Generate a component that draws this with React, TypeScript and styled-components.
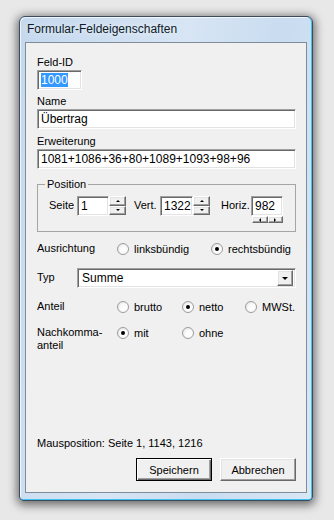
import React from 'react';
import styled, { createGlobalStyle, css } from 'styled-components';

const GlobalStyle = createGlobalStyle`
  html, body {
    margin: 0;
    padding: 0;
    background: #e8e8e8;
  }
  * { box-sizing: border-box; }
`;

const ui = `"Liberation Sans", Arial, sans-serif`;

const Stage = styled.div`
  width: 334px;
  height: 520px;
  padding: 16px 0 0 19px;
`;

const Window = styled.div`
  width: 294px;
  height: 485px;
  border: 1px solid #3d4c5c;
  border-radius: 6px 6px 4px 4px;
  background: linear-gradient(100deg, #c4d8ee 0%, #d7e5f4 45%, #c9dcf0 70%, #d9e7f5 100%);
  box-shadow: 0 2px 10px 2px rgba(0, 0, 0, 0.55), inset 0 -1px 0 #3cc3f2, inset -1px 0 0 #3cc3f2,
    inset 1px 1px 0 rgba(255, 255, 255, 0.7);
  display: flex;
  flex-direction: column;
`;

const TitleBar = styled.div`
  height: 25px;
  padding: 5px 0 0 7px;
  font-family: ${ui};
  font-size: 12px;
  color: #0d1a28;
  text-shadow: 0 0 6px rgba(255, 255, 255, 0.9);
`;

const Client = styled.div`
  margin: 0 5px;
  height: 451px;
  border: 1px solid #7f8d9b;
  background: #f0f0f0;
  padding: 12px 10px 11px 11px;
  display: flex;
  flex-direction: column;
  font-family: ${ui};
  font-size: 11px;
  color: #000;
`;

const Label = styled.div`
  height: 15px;
  line-height: 15px;
  white-space: nowrap;
`;

const sunken = css`
  background: #fff;
  border-top: 1px solid #a0a0a0;
  border-left: 1px solid #a0a0a0;
  border-bottom: 1px solid #fff;
  border-right: 1px solid #fff;
  box-shadow: inset 1px 1px 0 #696969, inset -1px -1px 0 #e3e3e3;
`;

const raised = css`
  background: #f0f0f0;
  border-top: 1px solid #fff;
  border-left: 1px solid #fff;
  border-bottom: 1px solid #696969;
  border-right: 1px solid #696969;
  box-shadow: inset -1px -1px 0 #a0a0a0, inset 1px 1px 0 #e3e3e3;
`;

const Field = styled.div<{ $w?: number; $mb?: number }>`
  ${sunken};
  width: ${(p) => (p.$w ? `${p.$w}px` : '100%')};
  height: 20px;
  padding: 2px 3px 0 3px;
  line-height: 15px;
  font-size: 12px;
  white-space: nowrap;
  overflow: hidden;
  margin-bottom: ${(p) => p.$mb ?? 4}px;
`;

const Selected = styled.span`
  background: #3399ff;
  color: #fff;
`;

const Group = styled.fieldset`
  margin: 9px 0 0 0;
  padding: 5px 0 8px 11px;
  border: 1px solid #a5a5a5;
  min-width: 0;
`;

const Legend = styled.legend`
  padding: 0 2px;
  margin-left: -4px;
  font-size: 11px;
  line-height: 13px;
`;

const PosRow = styled.div`
  display: flex;
  align-items: flex-start;
`;

const PosLabel = styled.span<{ $w: number; $ml?: number }>`
  width: ${(p) => p.$w}px;
  margin-left: ${(p) => p.$ml ?? 0}px;
  height: 19px;
  line-height: 19px;
  font-size: 11px;
  flex: none;
`;

const Spinner = styled.div`
  display: flex;
  flex-direction: column;
  width: 17px;
  height: 19px;
  flex: none;
`;

const SpinBtn = styled.div`
  ${raised};
  flex: 1;
  display: flex;
  align-items: center;
  justify-content: center;
`;

const HorizCol = styled.div`
  display: flex;
  flex-direction: column;
`;

const HSpinner = styled.div`
  display: flex;
  width: 31px;
  height: 7px;
  margin-left: 1px;
`;

const Arrow = styled.span<{ $dir: 'up' | 'down' | 'left' | 'right'; $s?: number }>`
  width: 0;
  height: 0;
  border-style: solid;
  ${({ $dir, $s = 2 }) =>
    $dir === 'up'
      ? `border-width: 0 ${$s}px ${$s}px ${$s}px; border-color: transparent transparent #000 transparent;`
      : $dir === 'down'
      ? `border-width: ${$s}px ${$s}px 0 ${$s}px; border-color: #000 transparent transparent transparent;`
      : $dir === 'left'
      ? `border-width: ${$s}px ${$s}px ${$s}px 0; border-color: transparent #000 transparent transparent;`
      : `border-width: ${$s}px 0 ${$s}px ${$s}px; border-color: transparent transparent transparent #000;`}
`;

const OptRow = styled.div<{ $mt: number }>`
  display: flex;
  align-items: flex-start;
  margin-top: ${(p) => p.$mt}px;
`;

const RowLabel = styled.div<{ $w: number }>`
  width: ${(p) => p.$w}px;
  flex: none;
  line-height: 13px;
  padding-top: 1px;
`;

const Option = styled.label<{ $w?: number }>`
  display: flex;
  align-items: center;
  gap: 5px;
  width: ${(p) => (p.$w ? `${p.$w}px` : 'auto')};
  flex: none;
  height: 15px;
`;

const Radio = styled.span<{ $on?: boolean }>`
  width: 12px;
  height: 12px;
  border-radius: 50%;
  border: 1px solid #9c9c9c;
  background: radial-gradient(circle at 60% 60%, #fff 0%, #fafafa 45%, #d8d8d8 100%);
  display: flex;
  align-items: center;
  justify-content: center;
  flex: none;
  &::after {
    content: '';
    width: 4px;
    height: 4px;
    border-radius: 50%;
    background: ${(p) => (p.$on ? '#000' : 'transparent')};
  }
`;

const Combo = styled.div`
  ${sunken};
  flex: 1;
  height: 20px;
  display: flex;
  align-items: center;
  padding: 0 2px 0 4px;
  font-size: 12px;
`;

const ComboText = styled.span`
  flex: 1;
`;

const ComboBtn = styled.div`
  ${raised};
  width: 16px;
  height: 16px;
  display: flex;
  align-items: center;
  justify-content: center;
`;

const Status = styled.div`
  margin-top: auto;
  height: 15px;
  line-height: 15px;
`;

const Buttons = styled.div`
  display: flex;
  justify-content: flex-end;
  gap: 8px;
  margin-top: 7px;
`;

const Button = styled.button<{ $default?: boolean }>`
  width: 76px;
  height: 23px;
  font-family: ${ui};
  font-size: 11px;
  color: #000;
  background: #f0f0f0;
  padding: 0;
  border-top: 1px solid ${(p) => (p.$default ? '#000' : '#fff')};
  border-left: 1px solid ${(p) => (p.$default ? '#000' : '#fff')};
  border-bottom: 1px solid ${(p) => (p.$default ? '#000' : '#696969')};
  border-right: 1px solid ${(p) => (p.$default ? '#000' : '#696969')};
  box-shadow: ${(p) =>
    p.$default
      ? 'inset 1px 1px 0 #fff, inset -1px -1px 0 #696969, inset -2px -2px 0 #a0a0a0'
      : 'inset -1px -1px 0 #a0a0a0, inset 1px 1px 0 #e3e3e3'};
`;

function Spin() {
  return (
    <Spinner>
      <SpinBtn>
        <Arrow $dir="up" />
      </SpinBtn>
      <SpinBtn>
        <Arrow $dir="down" />
      </SpinBtn>
    </Spinner>
  );
}

export default function App() {
  return (
    <Stage>
      <GlobalStyle />
      <Window>
        <TitleBar>Formular-Feldeigenschaften</TitleBar>
        <Client>
          <Label>Feld-ID</Label>
          <Field $w={45}>
            <Selected>1000</Selected>
          </Field>
          <Label>Name</Label>
          <Field $mb={5}>Übertrag</Field>
          <Label>Erweiterung</Label>
          <Field $mb={0}>1081+1086+36+80+1089+1093+98+96</Field>

          <Group>
            <Legend>Position</Legend>
            <PosRow>
              <PosLabel $w={28}>Seite</PosLabel>
              <Field $w={32} $mb={0}>1</Field>
              <Spin />
              <PosLabel $w={26} $ml={8}>Vert.</PosLabel>
              <Field $w={33} $mb={0}>1322</Field>
              <Spin />
              <PosLabel $w={30} $ml={11}>Horiz.</PosLabel>
              <HorizCol>
                <Field $w={32} $mb={0}>982</Field>
                <HSpinner>
                  <SpinBtn>
                    <Arrow $dir="left" />
                  </SpinBtn>
                  <SpinBtn>
                    <Arrow $dir="right" />
                  </SpinBtn>
                </HSpinner>
              </HorizCol>
            </PosRow>
          </Group>

          <OptRow $mt={9}>
            <RowLabel $w={80}>Ausrichtung</RowLabel>
            <Option $w={94}>
              <Radio />
              linksbündig
            </Option>
            <Option>
              <Radio $on />
              rechtsbündig
            </Option>
          </OptRow>

          <OptRow $mt={12}>
            <RowLabel $w={40} style={{ paddingTop: 3 }}>
              Typ
            </RowLabel>
            <Combo>
              <ComboText>Summe</ComboText>
              <ComboBtn>
                <Arrow $dir="down" $s={3} />
              </ComboBtn>
            </Combo>
          </OptRow>

          <OptRow $mt={11}>
            <RowLabel $w={80}>Anteil</RowLabel>
            <Option $w={65}>
              <Radio />
              brutto
            </Option>
            <Option $w={63}>
              <Radio $on />
              netto
            </Option>
            <Option>
              <Radio />
              MWSt.
            </Option>
          </OptRow>

          <OptRow $mt={11}>
            <RowLabel $w={80}>
              Nachkomma-
              <br />
              anteil
            </RowLabel>
            <Option $w={65}>
              <Radio $on />
              mit
            </Option>
            <Option>
              <Radio />
              ohne
            </Option>
          </OptRow>

          <Status>Mausposition: Seite 1, 1143, 1216</Status>
          <Buttons>
            <Button $default>Speichern</Button>
            <Button>Abbrechen</Button>
          </Buttons>
        </Client>
      </Window>
    </Stage>
  );
}
